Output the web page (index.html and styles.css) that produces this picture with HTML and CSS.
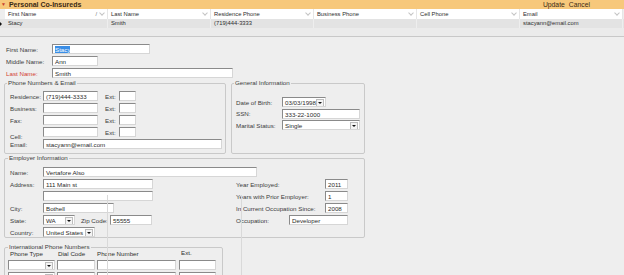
FILE: index.html
```html
<!DOCTYPE html>
<html lang="en">

<head>
    <meta charset="UTF-8">
    <title>Personal Co-Insureds</title>
    <link rel="stylesheet" href="styles.css">
</head>

<body>
    <div class="head">
        <span class="title"><span class="arrow">&#9660;</span>Personal Co-Insureds</span>
        <span class="actions"><span>Update</span><span>Cancel</span></span>
    </div>

    <div class="grid">
        <div class="row hdr">
            <div class="cell">First Name<span class="pin">/</span><span class="chev"></span></div>
            <div class="cell">Last Name<span class="chev"></span></div>
            <div class="cell">Residence Phone<span class="chev"></span></div>
            <div class="cell">Business Phone<span class="chev"></span></div>
            <div class="cell">Cell Phone<span class="chev"></span></div>
            <div class="cell">Email<span class="chev"></span></div>
        </div>
        <div class="row data">
            <span class="marker"></span>
            <div class="cell">Stacy</div>
            <div class="cell">Smith</div>
            <div class="cell">(719)444-3333</div>
            <div class="cell"></div>
            <div class="cell"></div>
            <div class="cell">stacyann@email.com</div>
        </div>
        <div class="row empty"></div>
    </div>

    <div class="form">
        <div class="names">
            <label>First Name:</label><span class="box w98"><span class="sel">Stacy</span></span>
            <label>Middle Name:</label><span class="box w46">Ann</span>
            <label class="req">Last Name:</label><span class="box w181">Smith</span>
        </div>

        <div class="pair">
            <fieldset class="phones">
                <legend>Phone Numbers &amp; Email</legend>
                <div class="phone-grid">
                    <label>Residence:</label><span class="box w55">(719)444-3333</span><label class="ext">Ext:</label><span class="box w17"></span>
                    <label>Business:</label><span class="box w55"></span><label class="ext">Ext:</label><span class="box w17"></span>
                    <label>Fax:</label><span class="box w55"></span><label class="ext">Ext:</label><span class="box w17"></span>
                    <label class="low">Cell:</label><span class="box w55"></span><label class="ext">Ext:</label><span class="box w17"></span>
                    <label>Email:</label><span class="box wide">stacyann@email.com</span>
                </div>
            </fieldset>

            <fieldset class="general">
                <legend>General Information</legend>
                <div class="gen-grid">
                    <label>Date of Birth:</label><span class="box w44 drop">03/03/1998<i class="btn"></i></span>
                    <label>SSN:</label><span class="box w78">333-22-1000</span>
                    <label>Marital Status:</label><span class="box w78 drop">Single<i class="btn"></i></span>
                </div>
            </fieldset>
        </div>

        <fieldset class="employer">
            <legend>Employer Information</legend>
            <div class="emp-name">
                <label>Name:</label><span class="box w214">Vertafore Also</span>
            </div>
            <div class="emp-cols">
                <div class="emp-left">
                    <label>Address:</label><span class="box w110">111 Main st</span>
                    <label></label><span class="box w110"></span>
                    <label>City:</label><span class="box w71">Bothell</span>
                    <label>State:</label>
                    <span class="state-line">
                        <span class="box w32 drop">WA<i class="btn"></i></span>
                        <label class="zip">Zip Code:</label><span class="box w42">55555</span>
                    </span>
                    <label>Country:</label><span class="box w52 drop">United States<i class="btn"></i></span>
                </div>
                <div class="emp-right">
                    <div class="emp-row"><label>Year Employed:</label><span class="box w23">2011</span></div>
                    <div class="emp-row"><label>Years with Prior Employer:</label><span class="box w23">1</span></div>
                    <div class="emp-row"><label>In Current Occupation Since:</label><span class="box w23">2008</span></div>
                    <div class="emp-row"><label>Occupation:</label><span class="box w59">Developer</span></div>
                </div>
            </div>
        </fieldset>

        <fieldset class="intl">
            <legend>International Phone Numbers</legend>
            <div class="intl-grid">
                <span class="col-h">Phone Type</span>
                <span class="col-h dial">Dial Code</span>
                <span class="col-h num">Phone Number</span>
                <span class="col-h ext">Ext.</span>
                <span class="box drop"><i class="btn"></i></span>
                <span class="box"></span>
                <span class="box"></span>
                <span class="box last"></span>
                <span class="box drop"><i class="btn"></i></span>
                <span class="box"></span>
                <span class="box"></span>
                <span class="box last"></span>
            </div>
        </fieldset>
    </div>

    <div class="ghost"></div>
</body>

</html>
```

FILE: styles.css
```css
body {
    margin: 0;
    background: #eeeeee;
    font-family: "Liberation Sans", Arial, sans-serif;
    font-size: 6.2px;
    color: #2e2e2e;
    overflow: hidden;
    height: 275px;
}

.head {
    height: 9px;
    background: #f7c87b;
    display: flex;
    justify-content: space-between;
    align-items: center;
    padding: 0 34px 0 1px;
}

.head .title {
    font-weight: bold;
    font-size: 7px;
    color: #3b2a14;
}

.head .arrow {
    color: #c8402c;
    font-size: 5px;
    margin-right: 3px;
    vertical-align: 1px;
}

.head .actions {
    display: flex;
    gap: 4px;
    font-size: 6.8px;
    color: #3b2a14;
}

.grid {
    border-bottom: 1px solid #c8c8c8;
    font-size: 5.8px;
}

.row {
    display: flex;
    padding-left: 5px;
    position: relative;
}

.row .cell {
    width: 103px;
    padding-left: 3px;
    box-sizing: border-box;
    position: relative;
}

.hdr {
    height: 10px;
    line-height: 10px;
}

.hdr .cell {
    background: #fff;
    border-right: 1px solid #e6e6e6;
}

.hdr .chev {
    position: absolute;
    right: 3px;
    top: 2px;
    width: 3px;
    height: 3px;
    border-right: 1px solid #c4c4c4;
    border-bottom: 1px solid #c4c4c4;
    transform: rotate(45deg);
}

.hdr .pin {
    position: absolute;
    right: 10px;
    color: #777;
}

.data {
    height: 9px;
    line-height: 9px;
    background: #e3e3e3;
}

.data .cell {
    border-right: 1px solid #eeeeee;
}

.data .marker {
    position: absolute;
    left: 0;
    top: 3px;
    border-top: 2px solid transparent;
    border-bottom: 2px solid transparent;
    border-left: 2px solid #111;
}

.empty {
    height: 8px;
    background: #ebebeb;
}

.form {
    padding: 7px 0 0 4px;
}

label {
    color: #3c3c3c;
    white-space: nowrap;
    align-self: center;
}

label.req {
    color: #d23c32;
}

.box {
    display: block;
    height: 10px;
    line-height: 9px;
    box-sizing: border-box;
    background: #fff;
    border: 1px solid #d6d6d6;
    border-top-color: #8a8a8a;
    border-left-color: #8a8a8a;
    padding-left: 2px;
    color: #2a2a2a;
    position: relative;
    white-space: nowrap;
    overflow: hidden;
}

.sel {
    background: #3a8ee6;
    color: #fff;
}

.drop .btn {
    position: absolute;
    right: 1px;
    top: 1px;
    width: 6px;
    height: 6px;
    border: 1px solid #bdbdbd;
    background: #f4f4f4;
}

.drop .btn::after {
    content: "";
    position: absolute;
    left: 1px;
    top: 2px;
    border-left: 2px solid transparent;
    border-right: 2px solid transparent;
    border-top: 2px solid #111;
}

.w17 { width: 17px; }
.w23 { width: 23px; }
.w32 { width: 32px; }
.w42 { width: 42px; }
.w44 { width: 44px; }
.w46 { width: 46px; }
.w52 { width: 52px; }
.w55 { width: 55px; }
.w59 { width: 59px; }
.w71 { width: 71px; }
.w78 { width: 78px; }
.w98 { width: 98px; }
.w110 { width: 110px; }
.w181 { width: 181px; }
.w214 { width: 214px; }

.names {
    display: grid;
    grid-template-columns: 46px auto;
    row-gap: 2px;
    padding-left: 2px;
    justify-items: start;
}

fieldset {
    margin: 0;
    border: 1px solid #c9c9c9;
    border-radius: 2px;
    min-width: 0;
    box-sizing: border-box;
}

legend {
    padding: 0 1px;
    margin-left: -2px;
    color: #3c3c3c;
    line-height: 6px;
}

.pair {
    display: flex;
    gap: 5px;
    margin-top: 2px;
}

.phones {
    width: 222px;
    height: 74px;
    padding: 5px 0 0 5px;
}

.phones legend {
    margin-left: -3px;
}

.phone-grid {
    display: grid;
    grid-template-columns: 33px 55px 21px 17px;
    row-gap: 2px;
    justify-items: start;
}

.phone-grid .ext {
    padding-left: 7px;
}

.phone-grid .wide {
    grid-column: 2 / 5;
    width: 179px;
}

.phone-grid .low {
    align-self: end;
    margin-bottom: -3px;
}

.general {
    width: 134px;
    height: 74px;
    padding: 11px 0 0 4px;
}

.gen-grid {
    display: grid;
    grid-template-columns: 46px auto;
    row-gap: 1.5px;
    justify-items: start;
}

.employer {
    width: 361px;
    height: 83px;
    margin-top: 1px;
    padding: 6px 0 0 5px;
}

.emp-name {
    display: grid;
    grid-template-columns: 33px auto;
}

.emp-cols {
    display: flex;
    margin-top: 2px;
}

.emp-left {
    display: grid;
    grid-template-columns: 33px auto;
    row-gap: 2px;
    width: 226px;
    justify-items: start;
}

.state-line {
    display: flex;
    align-items: center;
}

.state-line .zip {
    width: 29px;
    padding-left: 6px;
}

.emp-right {
    width: 112px;
    display: flex;
    flex-direction: column;
    gap: 2px;
}

.emp-row {
    display: flex;
    justify-content: space-between;
    align-items: center;
}

.intl {
    width: 219px;
    height: 40px;
    margin-top: 6px;
    padding: 0 0 0 3px;
}

.intl legend {
    margin-left: 0;
}

.intl-grid {
    display: grid;
    grid-template-columns: 47px 38px 79px 38px;
    column-gap: 2px;
    row-gap: 2px;
    align-items: end;
}

.intl-grid .col-h {
    padding-left: 2px;
    line-height: 8px;
}

.intl-grid .dial {
    padding-left: 1px;
}

.intl-grid .num {
    padding-left: 0;
}

.intl-grid .ext {
    margin-left: 1px;
    align-self: start;
    line-height: 5px;
}

.intl-grid .last {
    margin-left: 1px;
}

.ghost {
    position: absolute;
    left: 107px;
    top: 195px;
    width: 133px;
    height: 80px;
    border-left: 1px solid #d9d9d9;
    border-right: 1px solid #d9d9d9;
    pointer-events: none;
}
```
